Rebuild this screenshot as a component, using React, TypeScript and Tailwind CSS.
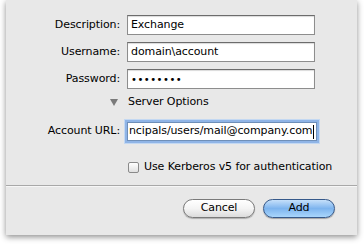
const font = { fontFamily: '"DejaVu Sans", "Liberation Sans", sans-serif' };

function Field({ children, focused }: { children: React.ReactNode; focused?: boolean }) {
  return (
    <div
      className={
        focused
          ? "flex h-[19px] w-[190px] items-center overflow-hidden border border-[#6f8fb8] bg-white pl-[1px] shadow-[0_0_0_2px_#8fb4e6,0_0_0_3px_#c3d8f2]"
          : "flex h-[20px] w-[188px] items-center overflow-hidden border border-[#8d8d8d] border-t-[#6c6c6c] bg-white pl-[3px] shadow-[inset_0_1px_1px_rgba(0,0,0,0.15)]"
      }
    >
      {children}
    </div>
  );
}

function Row({ label, children }: { label: string; children: React.ReactNode }) {
  return (
    <div className="flex items-center">
      <div className="w-[121px] pr-[7px] text-right">{label}</div>
      {children}
    </div>
  );
}

export default function App() {
  return (
    <div className="h-[247px] w-[364px] overflow-hidden bg-white" style={font}>
      <div className="ml-[6px] flex h-[235px] w-[351px] flex-col bg-[#e8e8e8] text-[11px] tracking-[-0.1px] text-black shadow-[0_2px_6px_rgba(0,0,0,0.45)]">
        <div className="mt-[15px] flex flex-col gap-[7px]">
          <Row label="Description:">
            <Field>Exchange</Field>
          </Row>
          <Row label="Username:">
            <Field>domain\account</Field>
          </Row>
          <Row label="Password:">
            <Field>
              <span className="text-[10px] tracking-[0.5px]">••••••••</span>
            </Field>
          </Row>
        </div>

        <div className="mt-[5px] flex h-[16px] items-center">
          <svg width="8" height="7" viewBox="0 0 8 7" className="ml-[104px]">
            <path d="M0 0 H8 L4 7 Z" fill="#7a7a7a" />
          </svg>
          <span className="ml-[10px]">Server Options</span>
        </div>

        <div className="mt-[12px]">
          <Row label="Account URL:">
            <Field focused>
              <span className="whitespace-nowrap">ncipals/users/mail@company.com</span>
              <span className="ml-[1px] h-[14px] w-[1px] shrink-0 bg-black" />
            </Field>
          </Row>
        </div>

        <div className="mt-[19px] flex h-[14px] items-center pl-[122px]">
          <div className="h-[11px] w-[11px] rounded-[2px] border border-[#8a8a8a] bg-gradient-to-b from-white to-[#e0e0e0]" />
          <span className="ml-[5px]">Use Kerberos v5 for authentication</span>
        </div>

        <div className="mt-[11px] h-px bg-[#a8a8a8] shadow-[0_1px_0_#f6f6f6]" />

        <div className="mt-[13px] flex justify-end gap-[8px] pr-[22px]">
          <button className="h-[19px] w-[72px] rounded-full border border-[#7a7a7a] bg-gradient-to-b from-white via-[#f4f4f4] to-[#dcdcdc] shadow-[0_1px_1px_rgba(0,0,0,0.25)]">
            Cancel
          </button>
          <button className="h-[19px] w-[72px] rounded-full border border-[#36598a] bg-gradient-to-b from-[#c6e0fa] via-[#7db4ee] to-[#a9d6fb] shadow-[0_1px_1px_rgba(0,0,0,0.3)]">
            Add
          </button>
        </div>
      </div>
    </div>
  );
}
